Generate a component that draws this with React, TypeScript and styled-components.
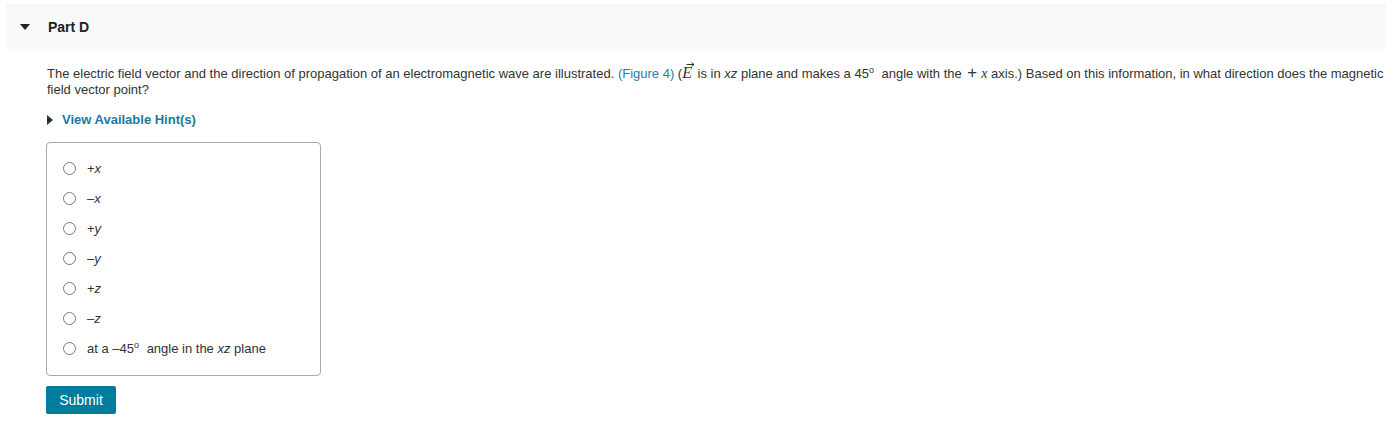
import React from 'react'
import styled, { createGlobalStyle } from 'styled-components'

const GlobalStyle = createGlobalStyle`
  html, body {
    margin: 0;
    padding: 0;
    background: #ffffff;
    font-family: "Liberation Sans", Arial, sans-serif;
    color: #333333;
  }
`

const Page = styled.div`
  padding: 4px 14px 0 6px;
`

const PartHeader = styled.div`
  display: flex;
  align-items: center;
  height: 45px;
  background: #f9f9f9;
  padding-left: 14px;
`

const Caret = styled.span<{ open?: boolean }>`
  display: inline-block;
  width: 0;
  height: 0;
  ${({ open }) =>
    open
      ? `border-left: 5px solid transparent;
         border-right: 5px solid transparent;
         border-top: 6px solid #222;`
      : `border-top: 5px solid transparent;
         border-bottom: 5px solid transparent;
         border-left: 6px solid #1f3340;`}
`

const PartTitle = styled.span`
  margin-left: 18px;
  font-size: 14px;
  font-weight: bold;
  color: #222;
`

const Body = styled.div`
  padding: 16px 0 0 40px;
`

const Question = styled.p`
  margin: 0;
  padding-left: 1px;
  font-size: 13px;
  line-height: 16px;
  color: #333;
`

const Link = styled.span`
  color: #2a7da8;
`

const MathI = styled.span`
  font-family: "Liberation Serif", "Times New Roman", serif;
  font-style: italic;
  font-size: 14px;
`

const VarI = styled.span`
  font-style: italic;
`

const Vec = styled.span`
  position: relative;
  display: inline-block;
  font-family: "Liberation Serif", "Times New Roman", serif;
  font-style: italic;
  font-size: 16px;
  line-height: 14px;
  padding-right: 2px;
`

const VecArrow = styled.svg`
  position: absolute;
  left: 4px;
  top: -4px;
`

const Sup = styled.sup`
  font-size: 9px;
  vertical-align: 5px;
  line-height: 0;
  margin-right: 4px;
`

const Plus = styled.span`
  font-size: 17px;
  margin: 0 4px 0 2px;
`

const HintToggle = styled.div`
  display: flex;
  align-items: center;
  margin-top: 14px;
  padding-left: 1px;
  font-size: 13px;
  font-weight: bold;
  color: #1a7aa0;
  line-height: 16px;
`

const HintText = styled.span`
  margin-left: 9px;
`

const ChoiceBox = styled.div`
  margin-top: 14px;
  width: 275px;
  border: 1px solid #aaaaaa;
  border-radius: 4px;
  padding: 10px 0 12px 0;
  box-sizing: border-box;
`

const Choice = styled.label`
  display: flex;
  align-items: center;
  height: 30px;
  padding-left: 16px;
  font-size: 13px;
  color: #333;
`

const Radio = styled.span`
  width: 11px;
  height: 11px;
  border: 1px solid #7a7a7a;
  border-radius: 50%;
  background: #fff;
  flex-shrink: 0;
`

const ChoiceLabel = styled.span`
  margin-left: 11px;
`

const SubmitButton = styled.button`
  display: block;
  margin-top: 10px;
  width: 70px;
  height: 28px;
  border: none;
  border-radius: 2px;
  background: #007c9c;
  color: #fff;
  font-family: "Liberation Sans", Arial, sans-serif;
  font-size: 14px;
  padding: 0;
`

const choices: React.ReactNode[] = [
  <>+<VarI>x</VarI></>,
  <>–<VarI>x</VarI></>,
  <>+<VarI>y</VarI></>,
  <>–<VarI>y</VarI></>,
  <>+<VarI>z</VarI></>,
  <>–<VarI>z</VarI></>,
  <>at a –45<Sup>o</Sup> angle in the <VarI>xz</VarI> plane</>,
]

export default function App() {
  return (
    <>
      <GlobalStyle />
      <Page>
        <PartHeader>
          <Caret open />
          <PartTitle>Part D</PartTitle>
        </PartHeader>
        <Body>
          <Question>
            The electric field vector and the direction of propagation of an electromagnetic wave are
            illustrated. <Link>(Figure 4)</Link> (
            <Vec>
              E
              <VecArrow width="9" height="5" viewBox="0 0 9 5">
                <path d="M0.5 2.5H8M5.5 0.5L8 2.5L5.5 4.5" fill="none" stroke="#333" strokeWidth="1" />
              </VecArrow>
            </Vec>{' '}
            is in <VarI>xz</VarI> plane and makes a 45<Sup>o</Sup> angle with the <Plus>+</Plus>
            <MathI>x</MathI> axis.) Based on this information, in what direction does the magnetic field
            vector point?
          </Question>
          <HintToggle>
            <Caret />
            <HintText>View Available Hint(s)</HintText>
          </HintToggle>
          <ChoiceBox>
            {choices.map((c, i) => (
              <Choice key={i}>
                <Radio />
                <ChoiceLabel>{c}</ChoiceLabel>
              </Choice>
            ))}
          </ChoiceBox>
          <SubmitButton>Submit</SubmitButton>
        </Body>
      </Page>
    </>
  )
}
